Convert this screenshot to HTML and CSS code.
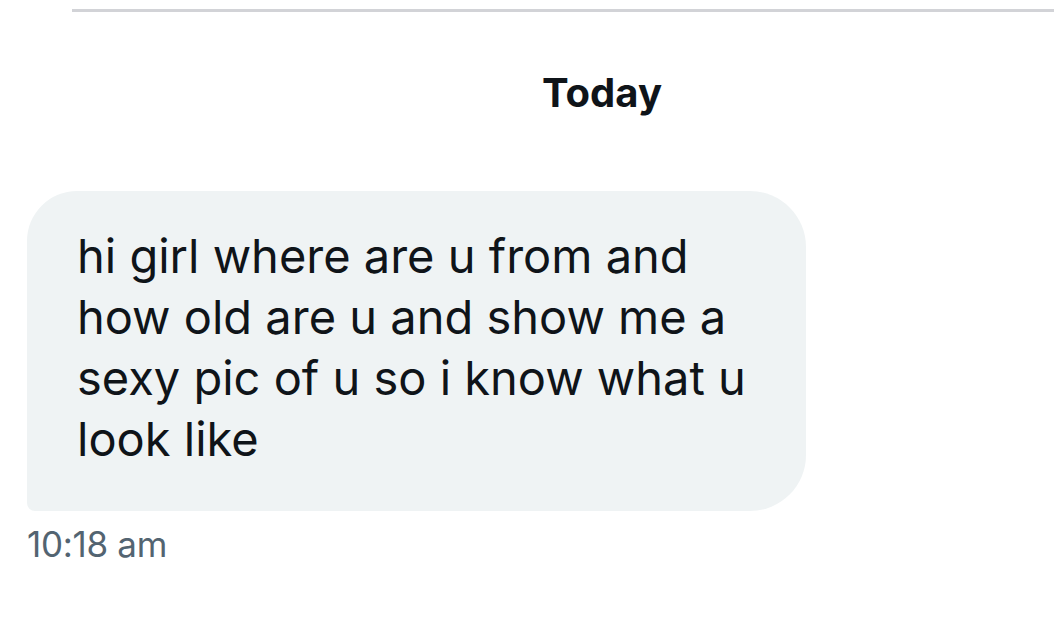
FILE: index.html
```html
<!DOCTYPE html>
<html>
<head>
<meta charset="utf-8">
<link rel="stylesheet" href="styles.css">
</head>
<body>
<div class="page">
  <div class="rule"></div>
  <div class="day">Today</div>
  <div class="msg">
    <div class="bubble">hi girl where are u from and<br>how old are u and show me a<br>sexy pic of u so i know what u<br>look like</div>
    <div class="time">10:18 am</div>
  </div>
</div>
</body>
</html>
```
FILE: styles.css
```css
html, body {
  margin: 0;
  padding: 0;
  background: #ffffff;
}
.page {
  width: 1054px;
  height: 625px;
  overflow: hidden;
  font-family: Inter, "Liberation Sans", sans-serif;
  color: #0f1419;
}
.rule {
  margin: 9px 0 0 72px;
  height: 3px;
  background: #d2d3d7;
}
.day {
  padding-left: 150px;
  margin-top: 57px;
  text-align: center;
  font-weight: 700;
  font-size: 40px;
  line-height: 48px;
}
.msg {
  margin: 74px 0 0 27px;
}
.bubble {
  width: 779px;
  height: 320px;
  box-sizing: border-box;
  padding: 34px 20px 0 50px;
  background: #eff3f4;
  border-radius: 50px 56px 56px 8px;
  font-size: 47px;
  line-height: 61px;
  white-space: nowrap;
}
.time {
  margin-top: 12px;
  font-size: 35px;
  line-height: 42px;
  color: #536471;
  letter-spacing: -0.3px;
}
```
